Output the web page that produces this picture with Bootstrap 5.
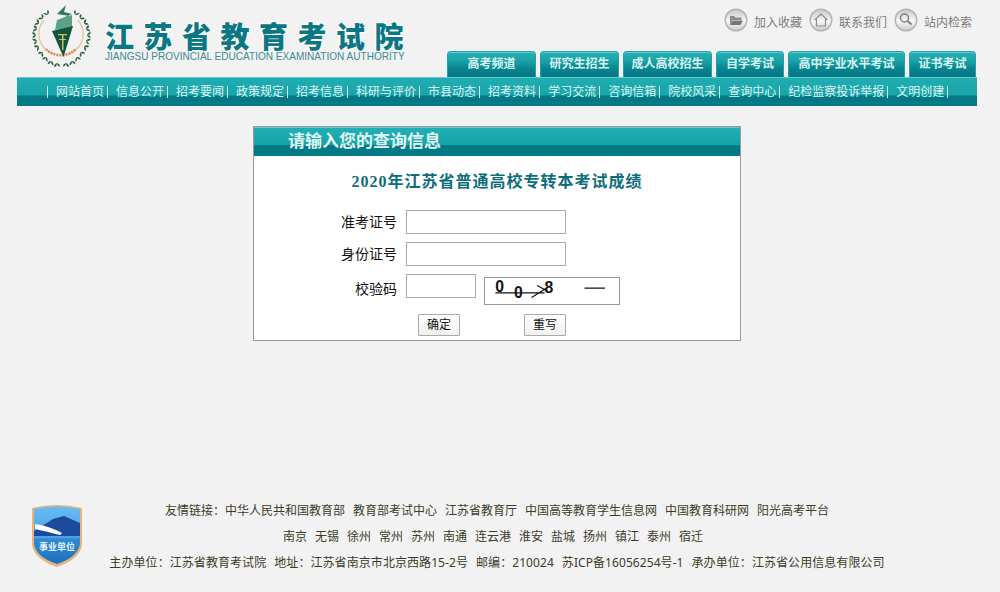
<!DOCTYPE html>
<html lang="zh-CN">
<head>
<meta charset="utf-8">
<title>江苏省教育考试院</title>
<link href="https://cdn.jsdelivr.net/npm/bootstrap@5.3.0/dist/css/bootstrap.min.css" rel="stylesheet">
<style>
html,body{height:592px;overflow:hidden}
body{background:#f2f2f2;font:12px/1.5 "Noto Sans","Noto Sans CJK SC",sans-serif;color:#333}
.pagewrap{width:994px}
.topzone{width:960px;height:77px;margin:0 auto}
.logo-mark{width:64px;height:72px;margin-left:13px;flex:none}
.logo-words{margin:21px 0 0 11px;width:310px}
.logo-cn{font:900 29px/29px "Noto Sans CJK SC",sans-serif;letter-spacing:9.500px;color:#0a7783;white-space:nowrap;text-shadow:0 0 2px #fff,0 0 2px #fff,1px 1px 1px #fff,-1px -1px 1px #fff}
.logo-en{font:10.05px/11px "Liberation Sans",sans-serif;color:#3f8b90;white-space:nowrap;margin-top:1px}
.tool-links{height:51px;padding:8px 5px 0 0;gap:6px;color:#7b7b7b}
.tool-links svg{width:24px;height:25px;flex:none}
.tool-item{gap:6px;line-height:29px;margin-left:1px}
.tabstrip{gap:4px;padding-right:1px;height:26px}
.tabbtn{height:26px;border:1px solid #23a3a8;border-bottom:0;border-radius:4px 4px 0 0;background:linear-gradient(#27b1b6 0,#19a3a7 35%,#0a8590 65%,#027884 100%);color:#d8f3f3;font-weight:700;font-size:12px;line-height:24px;text-align:center;box-shadow:inset 0 1px 0 #6ac9cc}
.tabbtn:nth-child(1),.tabbtn:nth-child(3){width:89px}
.tabbtn:nth-child(2){width:79px}
.tabbtn:nth-child(4){width:68px}
.tabbtn:nth-child(5){width:117px}
.tabbtn:nth-child(6){width:67px}
.menubar{width:960px;height:29px;margin:0 auto;background:linear-gradient(#20aeb3 0,#18a4a8 62%,#027a86 63%,#007a85 100%);border-top:1px solid #6cc7ca;padding-left:30px;align-items:center;color:#dff5f5;white-space:nowrap;line-height:26px}
.menubar::before{content:"";width:1px;height:12px;background:#dff5f5}
.menucell{padding-left:8px;gap:3px;align-items:center}
.menucell::after{content:"";width:1px;height:12px;background:#dff5f5}
.querybox{width:488px;height:215px;margin:20px auto 0;border:1px solid #999;border-radius:0;background:#fff}
.querybox .card-header{height:29px;padding:0 0 0 34px;border:0;border-radius:0;background:linear-gradient(#1fb0b5 0,#17a3a7 60%,#027a86 63%,#007a85 100%);border-top:1px solid #6cc7ca;color:#e2f6f6;font:700 17px/24px "Noto Sans CJK SC",sans-serif}
.querybox .card-body{padding:0}
.exam-title{margin:14px 0 16px;font:700 16px/24px "Liberation Serif","Noto Sans CJK SC",serif;letter-spacing:1px;color:#0d6e7b;text-align:center}
.fieldline{height:24px;margin-bottom:8px;gap:9px}
.fieldline label{width:143px;text-align:right;font-size:14px;line-height:24px;color:#111}
.fieldline label.lowlabel{padding-top:3px}
.fieldline .form-control{width:160px;height:24px;padding:1px 3px;border:1px solid #aaa;border-radius:0;font-size:12px;min-height:0}
.fieldline .form-control.shortfield{width:70px}
.captcha{width:136px;height:28px;margin:3px 0 0 -1px;border:1px solid #999;background:#fff;flex:none}
.btnline{margin-top:16px;padding-left:164px;gap:64px}
.btnline .btn{width:42px;height:22px;padding:0;border:1px solid #aaa;border-radius:1px;background:linear-gradient(#fff,#f0f0f0);color:#111;font-size:12px;line-height:20px}
.sitefoot{display:grid;grid-template-columns:83px 1fr 83px;margin-top:156px;text-align:center;line-height:25.5px;color:#3c3c28}
.sitefoot svg{width:52px;height:64px;margin:7px 0 0 31px}
.sitefoot span{margin:0 4px}
.sitefoot i{font-style:normal;font-family:"Noto Sans CJK TC",sans-serif}
.sitefoot p{margin:0;white-space:nowrap}
.sitefoot p.wideline{letter-spacing:.07px}
</style>
</head>
<body>
<div class="pagewrap">
  <header class="topzone d-flex justify-content-between">
    <div class="d-flex">
      <svg class="logo-mark" viewBox="30 0 64 72" role="img" aria-label="江苏省教育考试院">
        <defs><path id="lf" d="M0 0q2.400-2.400 5-1.600-1 3.200-5 1.600zM0 0q-1.600-2.400 0-5 2.400 2.400 0 5z" fill="#2c5f3a"/></defs>
        <g fill="none" stroke="#e8c39e" stroke-width="1.300"><path d="M44 20a21 21 0 0 0 10 34"/><path d="M78 20a21 21 0 0 1 -10 34"/></g>
        <path d="M46 49a21 21 0 0 0 30 0" fill="none" stroke="#d98c50" stroke-width="2.500" stroke-dasharray="2 1"/>
        <g transform="translate(61.500 38) scale(.96) translate(-61.500 -38)">
          <use href="#lf" transform="translate(47 14) rotate(-70)"/><use href="#lf" transform="translate(42 18) rotate(-85)"/><use href="#lf" transform="translate(38 23) rotate(-100)"/><use href="#lf" transform="translate(36 29) rotate(-115)"/><use href="#lf" transform="translate(35 35) rotate(-130)"/><use href="#lf" transform="translate(36 41) rotate(-145)"/><use href="#lf" transform="translate(38 47) rotate(-160)"/><use href="#lf" transform="translate(42 53) rotate(-175)"/><use href="#lf" transform="translate(46 58) rotate(170)"/><use href="#lf" transform="translate(51 62) rotate(155)"/><use href="#lf" transform="translate(57 64) rotate(140)"/>
          <g transform="translate(123 0) scale(-1 1)"><use href="#lf" transform="translate(47 14) rotate(-70)"/><use href="#lf" transform="translate(42 18) rotate(-85)"/><use href="#lf" transform="translate(38 23) rotate(-100)"/><use href="#lf" transform="translate(36 29) rotate(-115)"/><use href="#lf" transform="translate(35 35) rotate(-130)"/><use href="#lf" transform="translate(36 41) rotate(-145)"/><use href="#lf" transform="translate(38 47) rotate(-160)"/><use href="#lf" transform="translate(42 53) rotate(-175)"/><use href="#lf" transform="translate(46 58) rotate(170)"/><use href="#lf" transform="translate(51 62) rotate(155)"/><use href="#lf" transform="translate(57 64) rotate(140)"/></g>
        </g>
        <path d="M66 5 57 14 70 16 58 20 72 14 64 12z" fill="#2f7a5f"/>
        <path d="M57 20 72 15 72 27 55 30z" fill="#5ba287"/>
        <path d="M52 31 73 26 63.500 57z" fill="#10573a"/>
        <path d="M62 34h1.500v16h-1.500zM58 34h9v1.200h-9zM59 39h7v1h-7z" fill="#d8b66a"/>
      </svg>
      <div class="logo-words">
        <div class="logo-cn">江苏省教育考试院</div>
        <div class="logo-en">JIANGSU PROVINCIAL EDUCATION EXAMINATION AUTHORITY</div>
      </div>
    </div>
    <div class="d-flex flex-column align-items-end">
      <div class="tool-links d-flex align-items-start">
        <div class="tool-item d-flex">
          <svg viewBox="0 0 24 25"><defs><linearGradient id="rb" x1="0" y1="0" x2="0" y2="1"><stop offset="0" stop-color="#c9c9c9"/><stop offset=".55" stop-color="#f7f7f7"/><stop offset="1" stop-color="#d0d0d0"/></linearGradient></defs><circle cx="12" cy="12" r="11.500" fill="#b5b5b5"/><circle cx="12" cy="12" r="10" fill="url(#rb)"/><path d="M6 8h4l1.500 1.500h6V12H8.500L6 17z" fill="#8b8b8b"/><path d="M8.500 12.500H19L16.500 17H6z" fill="#777"/></svg>
          <span>加入收藏</span>
        </div>
        <div class="tool-item d-flex">
          <svg viewBox="0 0 24 25"><circle cx="12" cy="12" r="11.500" fill="#b5b5b5"/><circle cx="12" cy="12" r="10" fill="url(#rb)"/><path d="M5.500 12 12 6l6.500 6M7.500 11v7h9v-7" fill="none" stroke="#8d8d8d" stroke-width="1.200"/></svg>
          <span>联系我们</span>
        </div>
        <div class="tool-item d-flex">
          <svg viewBox="0 0 24 25"><circle cx="12" cy="12" r="11.500" fill="#b5b5b5"/><circle cx="12" cy="12" r="10" fill="url(#rb)"/><circle cx="10.500" cy="10" r="4" fill="none" stroke="#7f7f7f" stroke-width="1.500"/><path d="m13.500 13 4 3.500" stroke="#7f7f7f" stroke-width="2"/></svg>
          <span>站内检索</span>
        </div>
      </div>
      <nav class="tabstrip d-flex">
        <a class="tabbtn text-decoration-none">高考频道</a>
        <a class="tabbtn text-decoration-none">研究生招生</a>
        <a class="tabbtn text-decoration-none">成人高校招生</a>
        <a class="tabbtn text-decoration-none">自学考试</a>
        <a class="tabbtn text-decoration-none">高中学业水平考试</a>
        <a class="tabbtn text-decoration-none">证书考试</a>
      </nav>
    </div>
  </header>
  <nav class="menubar d-flex">
    <div class="menucell d-flex">网站首页</div><div class="menucell d-flex">信息公开</div><div class="menucell d-flex">招考要闻</div><div class="menucell d-flex">政策规定</div><div class="menucell d-flex">招考信息</div><div class="menucell d-flex">科研与评价</div><div class="menucell d-flex">市县动态</div><div class="menucell d-flex">招考资料</div><div class="menucell d-flex">学习交流</div><div class="menucell d-flex">咨询信箱</div><div class="menucell d-flex">院校风采</div><div class="menucell d-flex">查询中心</div><div class="menucell d-flex">纪检监察投诉举报</div><div class="menucell d-flex">文明创建</div>
  </nav>
  <section class="card querybox">
    <div class="card-header">请输入您的查询信息</div>
    <div class="card-body">
      <h1 class="exam-title">2020年江苏省普通高校专转本考试成绩</h1>
      <form>
        <div class="fieldline d-flex"><label for="f1">准考证号</label><input id="f1" class="form-control" type="text"></div>
        <div class="fieldline d-flex"><label for="f2">身份证号</label><input id="f2" class="form-control" type="text"></div>
        <div class="fieldline d-flex">
          <label for="f3" class="lowlabel">校验码</label><input id="f3" class="form-control shortfield" type="text">
          <svg class="captcha" viewBox="0 0 136 28">
            <g font-family="Liberation Sans,sans-serif" font-weight="700" fill="#111"><text x="7" y="15" font-size="17">0</text><text x="27" y="22" font-size="17">0</text><text x="60" y="16" font-size="17">8</text></g>
            <path d="M7 16H60M46 21 62 11M52 8l11 6M103 11h22" stroke="#111" stroke-width="1.300" fill="none"/>
          </svg>
        </div>
        <div class="btnline d-flex">
          <button type="button" class="btn">确定</button>
          <button type="button" class="btn">重写</button>
        </div>
      </form>
    </div>
  </section>
  <footer class="sitefoot">
    <svg viewBox="0 0 52 64" role="img" aria-label="事业单位">
      <defs><linearGradient id="sh" x1="0" y1="0" x2="0" y2="1"><stop offset="0" stop-color="#68bcf2"/><stop offset=".55" stop-color="#4c9fe2"/><stop offset=".56" stop-color="#2f8bd3"/><stop offset="1" stop-color="#1f70bc"/></linearGradient>
      <clipPath id="sc"><path d="M3 5Q26 0 49 5V40Q47 53 26 60 5 53 3 40z"/></clipPath></defs>
      <path d="M1 4Q26-2 51 4V41Q49 55 26 63 3 55 1 41z" fill="#e1b67f"/>
      <path d="M3 5Q26 0 49 5V40Q47 53 26 60 5 53 3 40z" fill="url(#sh)"/>
      <path d="M3 27 22 15l11-3 16 7V32H3z" fill="#1c4a9c" clip-path="url(#sc)"/>
      <path d="M4 20q14 2 27 9l-2 2Q14 27 4 25z" fill="#fff"/>
      <text x="26" y="46" text-anchor="middle" font-family="Noto Sans CJK SC,sans-serif" font-weight="700" font-size="9" fill="#e8f4ff">事业单位</text>
    </svg>
    <div>
      <p>友情链接<i>：</i>中华人民共和国教育部<span></span>教育部考试中心<span></span>江苏省教育厅<span></span>中国高等教育学生信息网<span></span>中国教育科研网<span></span>阳光高考平台</p>
      <p>南京<span></span>无锡<span></span>徐州<span></span>常州<span></span>苏州<span></span>南通<span></span>连云港<span></span>淮安<span></span>盐城<span></span>扬州<span></span>镇江<span></span>泰州<span></span>宿迁<span></span></p>
      <p class="wideline">主办单位<i>：</i>江苏省教育考试院<span></span>地址<i>：</i>江苏省南京市北京西路15-2号<span></span>邮编<i>：</i>210024<span></span>苏ICP备16056254号-1<span></span>承办单位<i>：</i>江苏省公用信息有限公司</p>
    </div>
  </footer>
</div>
<script src="https://cdn.jsdelivr.net/npm/bootstrap@5.3.0/dist/js/bootstrap.bundle.min.js"></script>
</body>
</html>
